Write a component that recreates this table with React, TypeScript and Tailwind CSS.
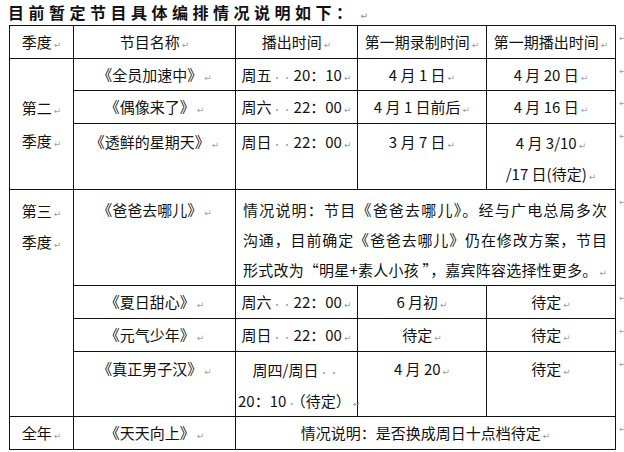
import React from "react";

// Word paragraph mark and space dots
const Mark = () => (
  <span className="ml-[2px] font-['DejaVu_Sans',sans-serif] text-[9px] leading-none text-[#a0a0a0] tracking-normal">↵</span>
);

const Dots = ({ n = 2 }: { n?: number }) => (
  <span className="mx-[1px] text-[9px] leading-none tracking-[1px] text-[#a0a0a0]">{"·".repeat(n)}</span>
);

type CellProps = {
  children?: React.ReactNode;
  rowSpan?: number;
  colSpan?: number;
  className?: string;
};

const Cell = ({ children, rowSpan, colSpan, className = "" }: CellProps) => (
  <td
    rowSpan={rowSpan}
    colSpan={colSpan}
    className={`border border-[#111] px-[2px] text-center leading-[30px] ${className}`}
  >
    {children}
  </td>
);

// row-end mark outside the table
const End = () => (
  <td className="pl-[1px] pt-[3px] align-top leading-[12px]">
    <Mark />
  </td>
);

const App: React.FC = () => {
  return (
    <div className="h-[452px] w-[624px] overflow-hidden bg-white font-['Noto_Sans_CJK_SC','Liberation_Sans',sans-serif] text-[15px] text-[#111]">
      {/* Title */}
      <div className="h-[25px] pl-[8px] pt-[3px] text-[16px] font-bold leading-[18px] tracking-[4.5px]">
        目前暂定节目具体编排情况说明如下：
        <span className="ml-[2px]">
          <Mark />
        </span>
      </div>

      <table className="ml-[9px] w-[615px] table-fixed border-collapse whitespace-nowrap">
        <colgroup>
          <col className="w-[64px]" />
          <col className="w-[162px]" />
          <col className="w-[122px]" />
          <col className="w-[129px]" />
          <col className="w-[129px]" />
          <col className="w-[9px]" />
        </colgroup>
        <tbody>
          <tr className="h-[33px]">
            <Cell className="align-top pt-[1px]">季度<Mark /></Cell>
            <Cell className="align-top pt-[1px]">节目名称<Mark /></Cell>
            <Cell className="align-top pt-[1px]">播出时间<Mark /></Cell>
            <Cell className="align-top pt-[1px]">第一期录制时间<Mark /></Cell>
            <Cell className="align-top pt-[1px]">第一期播出时间<Mark /></Cell>
            <End />
          </tr>

          {/* 第二季度 */}
          <tr className="h-[32px]">
            <Cell rowSpan={3} className="align-middle leading-[33px]">
              <div>第二<Mark /></div>
              <div>季度<Mark /></div>
            </Cell>
            <Cell className="align-top pt-[1px]">《全员加速中》<Mark /></Cell>
            <Cell className="align-top pt-[1px]">周五<Dots />20：10<Mark /></Cell>
            <Cell className="align-top pt-[1px]">4 月 1 日<Mark /></Cell>
            <Cell className="align-top pt-[1px]">4 月 20 日<Mark /></Cell>
            <End />
          </tr>
          <tr className="h-[33px]">
            <Cell className="align-top pt-[1px]">《偶像来了》<Mark /></Cell>
            <Cell className="align-top pt-[1px]">周六<Dots />22：00<Mark /></Cell>
            <Cell className="align-top pt-[1px]">4 月 1 日前后<Mark /></Cell>
            <Cell className="align-top pt-[1px]">4 月 16 日<Mark /></Cell>
            <End />
          </tr>
          <tr className="h-[65px]">
            <Cell className="align-top pt-[3px]">《透鲜的星期天》<Mark /></Cell>
            <Cell className="align-top pt-[3px]">周日<Dots />22：00<Mark /></Cell>
            <Cell className="align-top pt-[3px]">3 月 7 日<Mark /></Cell>
            <Cell className="align-top pt-[3px] leading-[31px]">
              <div>4 月 3/10<Mark /></div>
              <div>/17 日(待定)<Mark /></div>
            </Cell>
            <End />
          </tr>

          {/* 第三季度 */}
          <tr className="h-[96px]">
            <Cell rowSpan={4} className="align-top pt-[5px] leading-[31px]">
              <div>第三<Mark /></div>
              <div>季度<Mark /></div>
            </Cell>
            <Cell className="align-top pt-[5px]">《爸爸去哪儿》<Mark /></Cell>
            <Cell colSpan={3} className="align-top pl-[7px] pr-[8px] pt-[5px] leading-[30px] whitespace-normal text-justify [text-align-last:justify]">
              <div>情况说明：节目《爸爸去哪儿》。经与广电总局多次</div>
              <div>沟通，目前确定《爸爸去哪儿》仍在修改方案，节目</div>
              <div>形式改为“明星+素人小孩 ”，嘉宾阵容选择性更多。<Mark /></div>
            </Cell>
            <End />
          </tr>
          <tr className="h-[33px]">
            <Cell className="align-top pt-[1px]">《夏日甜心》<Mark /></Cell>
            <Cell className="align-top pt-[1px]">周六<Dots />22：00<Mark /></Cell>
            <Cell className="align-top pt-[1px]">6 月初<Mark /></Cell>
            <Cell className="align-top pt-[1px]">待定<Mark /></Cell>
            <End />
          </tr>
          <tr className="h-[33px]">
            <Cell className="align-top pt-[1px]">《元气少年》<Mark /></Cell>
            <Cell className="align-top pt-[1px]">周日<Dots />22：00<Mark /></Cell>
            <Cell className="align-top pt-[1px]">待定<Mark /></Cell>
            <Cell className="align-top pt-[1px]">待定<Mark /></Cell>
            <End />
          </tr>
          <tr className="h-[64px]">
            <Cell className="align-top pt-[2px]">《真正男子汉》<Mark /></Cell>
            <Cell className="align-top pt-[2px] leading-[31px]">
              <div>周四/周日<Dots /></div>
              <div>20：10<Dots n={1} />（待定）<Mark /></div>
            </Cell>
            <Cell className="align-top pt-[2px]">4 月 20<Mark /></Cell>
            <Cell className="align-top pt-[2px]">待定<Mark /></Cell>
            <End />
          </tr>

          {/* 全年 */}
          <tr className="h-[33px]">
            <Cell className="align-top pt-[1px]">全年<Mark /></Cell>
            <Cell className="align-top pt-[1px]">《天天向上》<Mark /></Cell>
            <Cell colSpan={3} className="align-top pt-[1px]">情况说明：是否换成周日十点档待定<Mark /></Cell>
            <End />
          </tr>
        </tbody>
      </table>
    </div>
  );
};

export default App;
